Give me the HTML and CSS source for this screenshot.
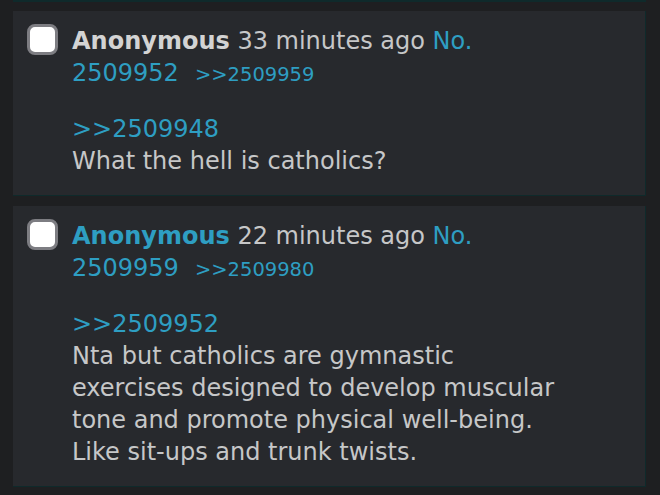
FILE: index.html
```html
<!DOCTYPE html>
<html>
<head>
<meta charset="utf-8">
<link rel="stylesheet" href="styles.css">
</head>
<body>
<div class="thread">
  <div class="post-tail"></div>
  <div class="post">
    <span class="check"></span>
    <div class="content">
      <div class="info"><span class="name">Anonymous</span> <span class="time">33 minutes ago</span> <a class="num">No. 2509952</a><a class="backlink">&gt;&gt;2509959</a></div>
      <div class="message"><a class="quote">&gt;&gt;2509948</a><br>What the hell is catholics?</div>
    </div>
  </div>
  <div class="post">
    <span class="check"></span>
    <div class="content">
      <div class="info"><span class="name you">Anonymous</span> <span class="time">22 minutes ago</span> <a class="num">No. 2509959</a><a class="backlink">&gt;&gt;2509980</a></div>
      <div class="message"><a class="quote">&gt;&gt;2509952</a><br>Nta but catholics are gymnastic exercises designed to develop muscular tone and promote physical well-being. Like sit-ups and trunk twists.</div>
    </div>
  </div>
</div>
</body>
</html>
```
FILE: styles.css
```css
html, body {
  margin: 0;
  padding: 0;
  background: #1e1f21;
}
body {
  font-family: "DejaVu Sans", sans-serif;
  font-size: 24px;
  line-height: 32px;
  color: #c6c7c8;
}
.thread {
  display: flex;
  flex-direction: column;
  gap: 10px;
  padding-left: 13px;
  width: 633px;
}
.post-tail {
  height: 0;
  border-bottom: 2px solid #0f2a2b;
  margin-bottom: -1px;
}
.post {
  display: flex;
  align-items: flex-start;
  gap: 14px;
  background: #27292d;
  border-right: 1px solid #0f2a2b;
  border-bottom: 1px solid #0f2a2b;
  padding: 14px 14px 18px 14px;
}
.check {
  flex: none;
  box-sizing: border-box;
  width: 31px;
  height: 31px;
  margin-top: -1px;
  background: #ffffff;
  border: 3px solid #7d7d82;
  border-radius: 8px;
}
.content {
  width: 484px;
}
.info {
  margin-bottom: 22px;
}
.name {
  font-weight: bold;
  color: #d3d3d3;
}
.name.you {
  color: #2e9ec2;
}
.num, .quote, .backlink {
  color: #2e9ec2;
  text-decoration: none;
}
.backlink {
  font-size: 19.5px;
  margin-left: 16px;
}
```
